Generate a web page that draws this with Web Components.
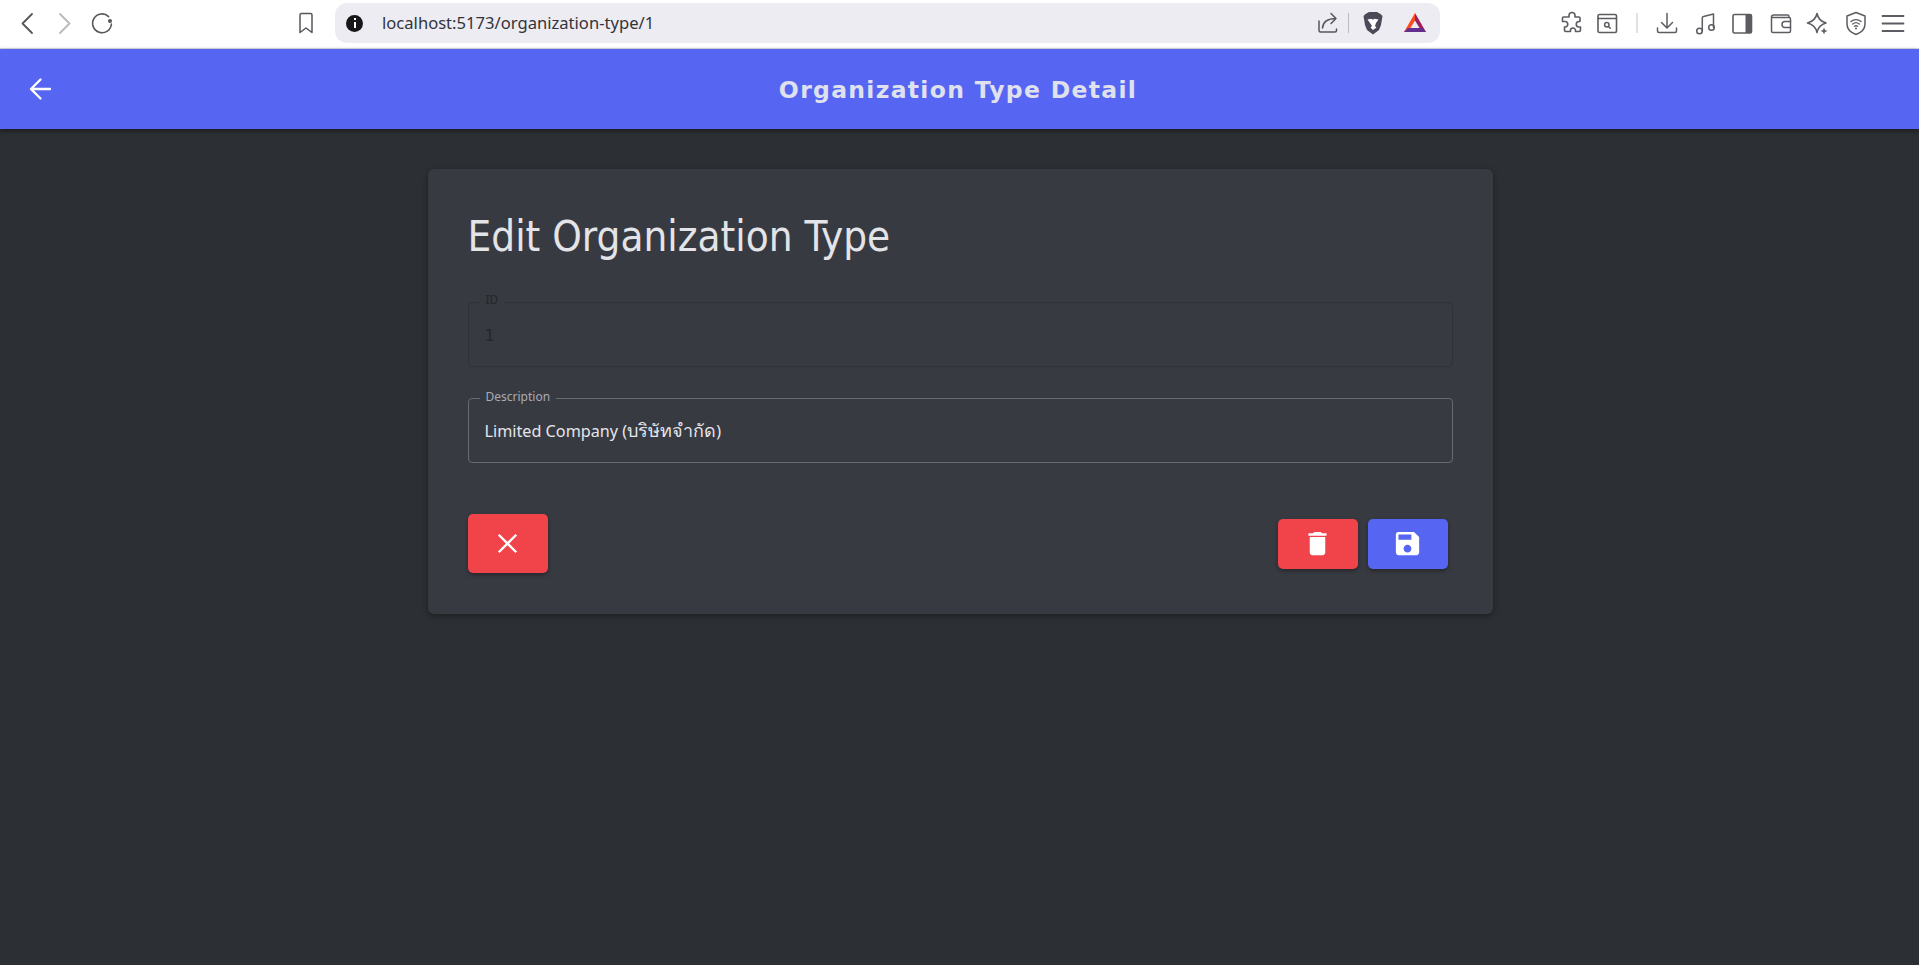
<!DOCTYPE html>
<html lang="en">
<head>
<meta charset="utf-8">
<title>Organization Type Detail</title>
<style>
  html, body { margin: 0; height: 100%; background: #2c2f33; overflow: hidden; }
  body { display: flex; flex-direction: column; font-family: "DejaVu Sans", "Noto Sans", sans-serif; }
</style>
</head>
<body>
<browser-bar url="localhost:5173/organization-type/1"></browser-bar>
<app-bar title="Organization Type Detail"></app-bar>
<detail-page>
  <detail-card heading="Edit Organization Type">
    <text-field label="ID" value="1" disabled></text-field>
    <text-field label="Description" value="Limited Company (บริษัทจำกัด)"></text-field>
    <icon-button slot="start" icon="close" color="#f0434a" tall></icon-button>
    <icon-button slot="end" icon="trash" color="#f0434a"></icon-button>
    <icon-button slot="end" icon="save" color="#5766f2"></icon-button>
  </detail-card>
</detail-page>

<script>
const TOOL_ICONS = {
  back: `<path d="M17 3l-9.500 9.500L17 22" stroke="#55575c" stroke-width="1.800"/>`,
  forward: `<path d="M7 3l9.500 9.500L7 22" stroke="#b9babd" stroke-width="1.800"/>`,
  reload: `<path d="M18.600 5.600A9.400 9.400 0 1 0 21.400 13" stroke="#55575c" stroke-width="1.600"/><circle cx="20" cy="10" r="2" fill="#55575c"/>`,
  bookmark: `<path d="M6 4a1.500 1.500 0 0 1 1.500-1.500h9A1.500 1.500 0 0 1 18 4v17.500l-6-4.500-6 4.500z" stroke="#55575c" stroke-width="1.500"/>`,
  share: `<path d="M3 10v9.500A1.500 1.500 0 0 0 4.500 21H19a1.500 1.500 0 0 0 1.500-1.500V18" stroke="#55575c" stroke-width="1.500"/><path d="M6.500 17C7 11 11 7.500 20 7.500M15 2.500l5 5-5 5" stroke="#55575c" stroke-width="1.500"/>`,
  brave: `<path d="M4.500 3L8 1h8l3.500 2 2 2-1.500 9-2 5-6 4.500L6 19l-2-5-1.500-9z" fill="#4b4b57"/><path d="M6.500 8.500l4-.8 1.500 1 1.500-1 4 .8-2.500 3.500-1 3 1.500 1.500L12 19l-2.500-2.500L11 15l-2-3z" fill="#fff"/>`,
  bat: `<path d="M13 2L2 21h4l7-11.500z" fill="#ff4b21"/><path d="M13 2l11 19h-4L13 9.500z" fill="#9c1f5e"/><path d="M2 21l4-4h14l4 4z" fill="#662d91"/>`,
  puzzle: `<path d="M9 4.500a3 3 0 0 1 6 0V6h4a1 1 0 0 1 1 1v3.500h-1a2.700 2.700 0 0 0 0 5.500h1.500v3a1.500 1.500 0 0 1-1.500 1.500h-3.500v-1a2.500 2.500 0 0 0-5 0v1H6A1.500 1.500 0 0 1 4.500 19.500V16h1a2.800 2.800 0 0 0 0-5.500h-3V7A1 1 0 0 1 3.500 6H9z" stroke="#5b5d62" stroke-width="1.600"/>`,
  panel: `<rect x="3" y="3.500" width="18.500" height="18" rx="1.500" stroke="#5b5d62" stroke-width="1.600"/><path d="M3 7.500h18.500" stroke="#5b5d62" stroke-width="1.400"/><circle cx="11.800" cy="13.800" r="2.200" stroke="#5b5d62" stroke-width="1.500"/><path d="M13.500 15.500l1.800 1.800" stroke="#5b5d62" stroke-width="1.500"/>`,
  download: `<path d="M12 2.500v14M6.500 11.500l5.500 5.500 5.500-5.500" stroke="#5b5d62" stroke-width="1.500"/><path d="M2.500 17v3a1.500 1.500 0 0 0 1.500 1.500h16a1.500 1.500 0 0 0 1.500-1.500v-3" stroke="#5b5d62" stroke-width="1.500"/>`,
  music: `<circle cx="5.500" cy="20" r="2.800" stroke="#5b5d62" stroke-width="1.500"/><circle cx="17.500" cy="16.500" r="2.800" stroke="#5b5d62" stroke-width="1.500"/><path d="M8.300 20V7a1.500 1.500 0 0 1 1.200-1.500l10-2.500v13.500" stroke="#5b5d62" stroke-width="1.500"/>`,
  sidebar: `<rect x="3" y="3.500" width="18.500" height="18.500" rx="1.500" stroke="#5b5d62" stroke-width="1.600"/><rect x="15.500" y="3.500" width="6" height="18.500" fill="#5b5d62"/>`,
  wallet: `<path d="M20 6.500V5.500A1.500 1.500 0 0 0 18.500 4H5A2 2 0 0 0 2.500 6v14A1.500 1.500 0 0 0 4 21.500h16a1.500 1.500 0 0 0 1.500-1.500V8A1.500 1.500 0 0 0 20 6.500H3" stroke="#5b5d62" stroke-width="1.500"/><path d="M21.500 10.500H16a3 3 0 0 0 0 6h5.500" stroke="#5b5d62" stroke-width="1.500"/>`,
  sparkle: `<path d="M12 2.500c1 5 3.500 8 9 9.500-5 1.500-8 4.500-9 9.500-1-5-4-8-9.500-9.500 5.500-1.500 8.500-4.500 9.500-9.500z" stroke="#5b5d62" stroke-width="1.600"/><path d="M19 16.500l1 2.500 2.500 1-2.500 1-1 2.500-1-2.500-2.500-1 2.500-1z" fill="#5b5d62"/>`,
  shield: `<path d="M12 1.500l9 3.500v8c0 5-3.500 8.500-9 10.500-5.500-2-9-5.500-9-10.500V5z" stroke="#5b5d62" stroke-width="1.500"/><path d="M7 10.500a7.500 7.500 0 0 1 10 0M8.800 13a5 5 0 0 1 6.400 0M10.500 15.300a2.500 2.500 0 0 1 3 0" stroke="#5b5d62" stroke-width="1.300"/><circle cx="12" cy="17.500" r="1" fill="#5b5d62"/>`,
  menu: `<path d="M1.500 5h21M1.500 12.500h21M1.500 20h21" stroke="#5b5d62" stroke-width="1.800"/>`,
};

class ToolIcon extends HTMLElement {
  connectedCallback() {
    const shadow = this.attachShadow({ mode: "open" });
    shadow.innerHTML = `
      <style>
        :host { display: block; width: 24px; height: 24px; flex: none; }
        svg { display: block; overflow: visible; }
      </style>
      <svg width="24" height="24" viewBox="0 0 24 24" fill="none" stroke-linecap="round" stroke-linejoin="round">${TOOL_ICONS[this.getAttribute("name")]}</svg>`;
  }
}

class UrlBar extends HTMLElement {
  connectedCallback() {
    const shadow = this.attachShadow({ mode: "open" });
    shadow.innerHTML = `
      <style>
        :host { display: flex; align-items: center; width: 1105px; height: 40px; box-sizing: border-box; padding: 0 14px 0 11px; background: #edecf2; border-radius: 12px; flex: none; }
        .info { width: 17px; height: 17px; border-radius: 50%; background: #17171a; display: flex; flex-direction: column; align-items: center; justify-content: center; gap: 1.500px; flex: none; }
        .info i { display: block; width: 2px; background: #fff; }
        .info i:first-child { height: 2px; }
        .info i:last-child { height: 6px; }
        .text { margin-left: 19px; font: 16.600px/20px "Noto Sans", sans-serif; color: #33343a; }
        .end { margin-left: auto; display: flex; align-items: center; }
        .sep { width: 1px; height: 20px; background: #b9b9c0; margin: 0 12px 0 8px; }
      </style>
      <span class="info"><i></i><i></i></span>
      <span class="text">${this.getAttribute("url")}</span>
      <span class="end">
        <tool-icon name="share"></tool-icon>
        <span class="sep"></span>
        <tool-icon name="brave"></tool-icon>
        <tool-icon name="bat" style="margin-left:17px"></tool-icon>
      </span>`;
  }
}

class BrowserBar extends HTMLElement {
  connectedCallback() {
    const shadow = this.attachShadow({ mode: "open" });
    shadow.innerHTML = `
      <style>
        :host { display: flex; align-items: center; height: 49px; box-sizing: border-box; padding: 0 0 2px 15px; background: #fff; border-bottom: 1px solid #dcdce0; flex: none; }
        .sep { width: 2px; height: 20px; background: #e0e0e4; flex: none; }
      </style>
      <tool-icon name="back"></tool-icon>
      <tool-icon name="forward" style="margin-left:14px"></tool-icon>
      <tool-icon name="reload" style="margin-left:13px"></tool-icon>
      <tool-icon name="bookmark" style="margin-left:180px"></tool-icon>
      <url-bar url="${this.getAttribute("url")}" style="margin-left:17px"></url-bar>
      <tool-icon name="puzzle" style="margin-left:120px"></tool-icon>
      <tool-icon name="panel" style="margin-left:11px"></tool-icon>
      <span class="sep" style="margin-left:17px"></span>
      <tool-icon name="download" style="margin-left:17px"></tool-icon>
      <tool-icon name="music" style="margin-left:15px"></tool-icon>
      <tool-icon name="sidebar" style="margin-left:12px"></tool-icon>
      <tool-icon name="wallet" style="margin-left:15px"></tool-icon>
      <tool-icon name="sparkle" style="margin-left:12px"></tool-icon>
      <tool-icon name="shield" style="margin-left:15px"></tool-icon>
      <tool-icon name="menu" style="margin-left:13px"></tool-icon>`;
  }
}

class AppBar extends HTMLElement {
  connectedCallback() {
    const shadow = this.attachShadow({ mode: "open" });
    shadow.innerHTML = `
      <style>
        :host { display: grid; grid-template-columns: 80px 1fr 80px; align-items: center; height: 80px; background: #5766f2; box-shadow: 0 2px 5px rgba(0,0,0,.45); position: relative; flex: none; }
        svg { display: block; margin-left: 29px; }
        h1 { margin: 2px 3px 0 0; text-align: center; font: bold 23.500px/28px "DejaVu Sans", sans-serif; letter-spacing: 1.300px; color: #dfe1ee; }
      </style>
      <svg width="24" height="24" viewBox="0 0 24 24" fill="none" stroke="#fff" stroke-width="2.400" stroke-linecap="round" stroke-linejoin="round"><path d="M21 12H2.500M11.500 2.500L2 12l9.500 9.500"/></svg>
      <h1>${this.getAttribute("title")}</h1>
      <span></span>`;
  }
}

class DetailPage extends HTMLElement {
  connectedCallback() {
    const shadow = this.attachShadow({ mode: "open" });
    shadow.innerHTML = `
      <style>
        :host { display: flex; justify-content: center; align-items: flex-start; flex: 1; padding: 40px 0 0 1px; background: #2c2f33; }
      </style>
      <slot></slot>`;
  }
}

class DetailCard extends HTMLElement {
  connectedCallback() {
    const shadow = this.attachShadow({ mode: "open" });
    shadow.innerHTML = `
      <style>
        :host { display: block; width: 1065px; height: 445px; box-sizing: border-box; padding: 40px; background: #383a42; border-radius: 6px; box-shadow: 0 2px 6px rgba(0,0,0,.35); }
        h2 { margin: 1px 0 38px; font: 400 41.800px/54px "DejaVu Sans Condensed", "DejaVu Sans", sans-serif; color: #e2e4e8; }
        .fields { display: grid; gap: 31px; }
        .actions { display: flex; justify-content: space-between; align-items: center; margin-top: 51px; }
        .end { display: flex; gap: 10px; padding-right: 5px; }
      </style>
      <h2>${this.getAttribute("heading")}</h2>
      <div class="fields"><slot></slot></div>
      <div class="actions">
        <slot name="start"></slot>
        <div class="end"><slot name="end"></slot></div>
      </div>`;
  }
}

class TextField extends HTMLElement {
  connectedCallback() {
    const shadow = this.attachShadow({ mode: "open" });
    const value = this.getAttribute("value").replace(/[\u0E00-\u0E7F]+/g, (thai) => `<span class="thai">${thai}</span>`);
    shadow.innerHTML = `
      <style>
        :host { display: block; position: relative; height: 65px; box-sizing: border-box; border: 1px solid #676a73; border-radius: 4px; }
        :host([disabled]) { border-color: #2f3137; }
        .label { position: absolute; left: 11px; top: -10px; padding: 0 6px; background: #383a42; font: 12px/16px "Noto Sans", sans-serif; color: #a8abb2; }
        .value { display: flex; align-items: center; white-space: pre; height: 100%; padding: 0 17px 0 16px; font: 16.200px/20px "Noto Sans", sans-serif; color: #e4e6ea; }
        .thai { font-size: 18px; }
        :host([disabled]) .label { color: #24262a; top: -11px; }
        :host([disabled]) .value { color: #24262a; font-family: "DejaVu Sans", sans-serif; height: calc(100% - 2px); padding-top: 2px; }
      </style>
      <span class="label">${this.getAttribute("label")}</span>
      <div class="value"><span>${value}</span></div>`;
  }
}

const BUTTON_ICONS = {
  close: `<path fill="none" stroke="#fff" stroke-width="1.800" d="M5.200 5.200l13.600 13.600M18.800 5.200L5.200 18.800"/>`,
  trash: `<path fill="#fff" d="M6 19c0 1.100.9 2 2 2h8c1.100 0 2-.9 2-2V7H6v12zM19 4h-3.500l-1-1h-5l-1 1H5v2h14V4z"/>`,
  save: `<path fill="#fff" d="M17 3H5c-1.110 0-2 .9-2 2v14c0 1.100.89 2 2 2h14c1.100 0 2-.9 2-2V7l-4-4zm-5 16c-1.660 0-3-1.340-3-3s1.340-3 3-3 3 1.340 3 3-1.340 3-3 3zm3-10H5V5h10v4z"/>`,
};

class IconButton extends HTMLElement {
  connectedCallback() {
    const shadow = this.attachShadow({ mode: "open" });
    shadow.innerHTML = `
      <style>
        :host { display: flex; align-items: center; justify-content: center; width: 80px; height: 50px; border-radius: 5px; background: ${this.getAttribute("color")}; box-shadow: 0 2px 4px rgba(0,0,0,.35); }
        :host([tall]) { height: 59px; }
        svg { display: block; }
      </style>
      <svg width="31" height="31" viewBox="0 0 24 24">${BUTTON_ICONS[this.getAttribute("icon")]}</svg>`;
  }
}

customElements.define("tool-icon", ToolIcon);
customElements.define("url-bar", UrlBar);
customElements.define("browser-bar", BrowserBar);
customElements.define("app-bar", AppBar);
customElements.define("detail-page", DetailPage);
customElements.define("detail-card", DetailCard);
customElements.define("text-field", TextField);
customElements.define("icon-button", IconButton);
</script>
</body>
</html>
